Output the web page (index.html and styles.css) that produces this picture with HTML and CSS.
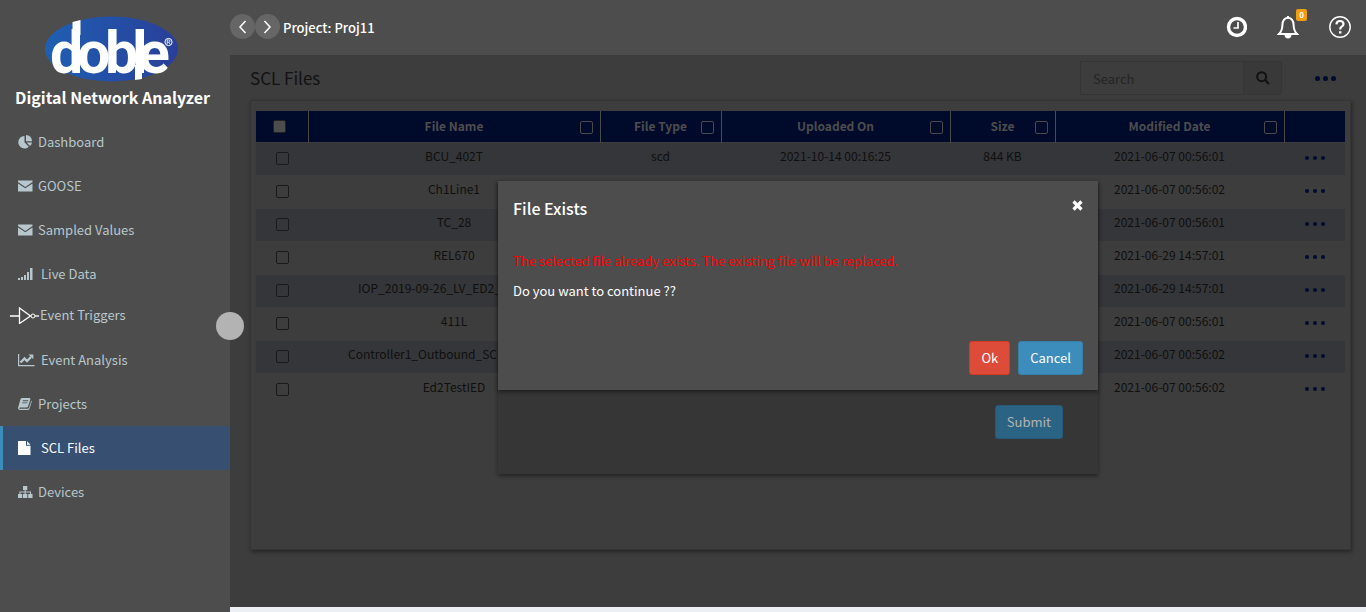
FILE: index.html
```html
<!DOCTYPE html>
<html lang="en">
<head>
<meta charset="utf-8">
<meta name="viewport" content="width=device-width, initial-scale=1">
<title>Digital Network Analyzer - SCL Files</title>
<link rel="stylesheet" href="styles.css">
</head>
<body>
<div class="app">
  <aside class="sidebar">
    <div class="brand">
      <svg class="logo" viewBox="0 0 136 68" width="136" height="68" role="img" aria-label="doble">
        <defs>
          <linearGradient id="oval" x1="0" x2="1"><stop offset="0" stop-color="#1f5fb2"/><stop offset="1" stop-color="#293f99"/></linearGradient>
        </defs>
        <ellipse cx="67.500" cy="34" rx="66.500" ry="32.500" fill="url(#oval)"/>
        <g fill="#fff">
          <text class="logo-text" y="58" x="6 33 61 88 94">doble</text>
          <path d="M28.500 7L36.500 5V20H28.500zM91 50H98V64L91 65z"/>
        </g>
        <g fill="none" stroke="#fff"><circle cx="124.500" cy="27" r="3.600" stroke-width="1"/><path d="M123.200 29.300V24.900H124.800Q126 25 126 26.100T124.800 27.200H123.200M124.800 27.200L126 29.300" stroke-width=".8"/></g>
      </svg>
      <div class="product">Digital Network Analyzer</div>
    </div>
    <nav class="menu">
      <a href="#" class="item"><svg width="15" height="14" viewBox="0 0 15 14"><path d="M6.500 1A6.200 6.200 0 1 0 10.800 11.700L6.500 7.300z"/><path d="M8 0A6 6 0 0 1 14 6.200H8z"/><path d="M8.600 7.400H14A6 6 0 0 1 12 11z"/></svg><span>Dashboard</span></a>
      <a href="#" class="item"><svg width="15" height="14" viewBox="0 0 15 14"><path d="M0 1.500H14.500V3L7.300 8 0 3zM0 4.500L7.300 9.300 14.500 4.500V12.500H0z"/></svg><span>GOOSE</span></a>
      <a href="#" class="item"><svg width="15" height="14" viewBox="0 0 15 14"><path d="M0 1.500H14.500V3L7.300 8 0 3zM0 4.500L7.300 9.300 14.500 4.500V12.500H0z"/></svg><span>Sampled Values</span></a>
      <a href="#" class="item wide"><svg width="15" height="14" viewBox="0 0 15 14"><path d="M0 11h2v2H0zM3 10h2v3H3zM6 8h2v5H6zM9 5h2v8H9zM12 1h2.500v12H12z"/></svg><span>Live Data</span></a>
      <a href="#" class="item trigger"><svg width="30" height="18" viewBox="0 0 30 18"><g fill="none" stroke="#fff" stroke-width="1.300"><path d="M0 10H9M9.500 2V17.500L20.500 10z"/><circle cx="23" cy="10" r="2" stroke-width="1"/><path d="M25 10H29"/></g></svg><span>Event Triggers</span></a>
      <a href="#" class="item chart"><svg width="17" height="14" viewBox="0 0 17 14"><path d="M0 1H1.200V12H16.500V13.200H0z"/><path d="M2.500 9.500L6.500 5.500 9 8 13 4" fill="none" stroke="#b8c7ce" stroke-width="2.400"/><path d="M10.500 1.500H15.300V6.300z"/></svg><span>Event Analysis</span></a>
      <a href="#" class="item"><svg width="15" height="14" viewBox="0 0 15 14"><path fill-rule="evenodd" d="M4 1H11.500Q12.700 1.200 12.300 2.400L10 9.500Q9.600 10.500 8.500 10.500H2Q1 10.700 1.400 11.700H9.700Q10.700 11.600 11 10.700L13.300 3.400Q14 4 13.600 5L11.500 11.700Q11 13 9.700 13H1.700Q-.4 12.500.1 10.600L2.500 2.300Q3 1 4 1zM5 3.300L4.700 4.200H10L10.300 3.300zM4.300 5.400L4 6.300H9.300L9.600 5.400z"/></svg><span>Projects</span></a>
      <a href="#" class="item wide active" aria-current="page"><svg width="15" height="14" viewBox="0 0 15 14"><path d="M0 0H8V4.800H12.500V14H0zM9 0L12.500 3.800H9z"/></svg><span>SCL Files</span></a>
      <a href="#" class="item"><svg width="15" height="14" viewBox="0 0 15 14"><path d="M5 1H9.300V5H7.700V6.500H13V9H14.500V13H10.200V9H12V7.500H7.700V9H9.300V13H5V9H6.600V7.500H2.400V9H4.200V13H0V9H1.400V6.500H6.600V5H5z"/></svg><span>Devices</span></a>
    </nav>
    <button class="handle" aria-label="Resize sidebar"></button>
  </aside>

  <main class="main">
    <header class="topbar">
      <button class="round" aria-label="Back"><svg width="9" height="14" viewBox="0 0 9 14"><path d="M7.500 1L2 7l5.500 6"/></svg></button>
      <button class="round" aria-label="Forward"><svg width="9" height="14" viewBox="0 0 9 14"><path d="M1.500 1L7 7l-5.500 6"/></svg></button>
      <span class="project">Project: Proj11</span>
      <div class="tools">
        <button class="tool" aria-label="History"><svg width="22" height="22" viewBox="0 0 22 22" fill="none" stroke="#fff"><circle cx="12" cy="11" r="8.500" stroke-width="3.400"/><path d="M13 6V12H8.500" stroke-width="1.700"/></svg></button>
        <button class="tool" aria-label="Notifications"><svg width="22" height="24" viewBox="0 0 22 24"><path d="M11 2.800C7 3.300 5.500 6 5.400 10C5.300 14 4.500 16.500 2 19H20C17.500 16.500 16.700 14 16.600 10C16.500 6 15 3.300 11 2.800z" fill="none" stroke="#fff" stroke-width="2"/><path d="M10 1h2v2h-2zM7.500 20H14.500Q14 23.500 11 23.500T7.500 20z" fill="#fff"/></svg><span class="badge">0</span></button>
        <button class="tool" aria-label="Help"><svg width="22" height="22" viewBox="0 0 22 22" fill="none" stroke="#fff"><circle cx="11" cy="11" r="10.200" stroke-width="1.400"/><path d="M7.400 8.300Q7.700 5 11 5T14.500 8Q14.500 9.500 12.700 10.700Q11.200 11.700 11.200 13.500" stroke-width="2.200"/><path d="M10 15.200H12.400V17.500H10z" fill="#fff" stroke="none"/></svg></button>
      </div>
    </header>

    <section class="content">
      <div class="heading">
        <h1>SCL Files</h1>
        <form class="search">
          <input type="text" placeholder="Search" aria-label="Search">
          <button type="button" aria-label="Run search"><svg width="14" height="14" viewBox="0 0 14 14" fill="none" stroke="#111"><circle cx="5.700" cy="5.700" r="4.500" stroke-width="2"/><path d="M9 9L13 13" stroke-width="2.200"/></svg></button>
        </form>
        <button class="dots big" aria-label="More actions"><i></i><i></i><i></i></button>
      </div>
      <div class="panel">
        <table class="files">
          <colgroup><col class="c-pick"><col><col class="c-type"><col class="c-date"><col class="c-size"><col class="c-date"><col class="c-more"></colgroup>
          <thead>
            <tr>
              <th><input type="checkbox" class="all" aria-label="Select all"></th>
              <th><div class="th"><span>File Name</span><input type="checkbox" aria-label="File Name options"></div></th>
              <th><div class="th"><span>File Type</span><input type="checkbox" aria-label="File Type options"></div></th>
              <th><div class="th"><span>Uploaded On</span><input type="checkbox" aria-label="Uploaded On options"></div></th>
              <th><div class="th"><span>Size</span><input type="checkbox" aria-label="Size options"></div></th>
              <th><div class="th"><span>Modified Date</span><input type="checkbox" aria-label="Modified Date options"></div></th>
              <th></th>
            </tr>
          </thead>
          <tbody>
            <tr><td><input type="checkbox" aria-label="Select BCU_402T"></td><td>BCU_402T</td><td>scd</td><td>2021-10-14 00:16:25</td><td>844 KB</td><td>2021-06-07 00:56:01</td><td><button class="dots" aria-label="Actions"><i></i><i></i><i></i></button></td></tr>
            <tr><td><input type="checkbox" aria-label="Select Ch1Line1"></td><td>Ch1Line1</td><td></td><td></td><td></td><td>2021-06-07 00:56:02</td><td><button class="dots" aria-label="Actions"><i></i><i></i><i></i></button></td></tr>
            <tr><td><input type="checkbox" aria-label="Select TC_28"></td><td>TC_28</td><td></td><td></td><td></td><td>2021-06-07 00:56:01</td><td><button class="dots" aria-label="Actions"><i></i><i></i><i></i></button></td></tr>
            <tr><td><input type="checkbox" aria-label="Select REL670"></td><td>REL670</td><td></td><td></td><td></td><td>2021-06-29 14:57:01</td><td><button class="dots" aria-label="Actions"><i></i><i></i><i></i></button></td></tr>
            <tr><td><input type="checkbox" aria-label="Select IOP_2019-09-26_LV_ED2"></td><td class="long">IOP_2019-09-26_LV_ED2_</td><td></td><td></td><td></td><td>2021-06-29 14:57:01</td><td><button class="dots" aria-label="Actions"><i></i><i></i><i></i></button></td></tr>
            <tr><td><input type="checkbox" aria-label="Select 411L"></td><td>411L</td><td></td><td></td><td></td><td>2021-06-07 00:56:01</td><td><button class="dots" aria-label="Actions"><i></i><i></i><i></i></button></td></tr>
            <tr><td><input type="checkbox" aria-label="Select Controller1_Outbound_SCL"></td><td class="long longer">Controller1_Outbound_SCL</td><td></td><td></td><td></td><td>2021-06-07 00:56:02</td><td><button class="dots" aria-label="Actions"><i></i><i></i><i></i></button></td></tr>
            <tr><td><input type="checkbox" aria-label="Select Ed2TestIED"></td><td>Ed2TestIED</td><td></td><td></td><td></td><td>2021-06-07 00:56:02</td><td><button class="dots" aria-label="Actions"><i></i><i></i><i></i></button></td></tr>
          </tbody>
        </table>
      </div>
    </section>

    <div class="dialogs">
      <div class="dialog upload">
        <button class="btn submit">Submit</button>
      </div>
      <div class="dialog confirm" role="dialog" aria-labelledby="confirm-title">
        <div class="dialog-head">
          <h2 id="confirm-title">File Exists</h2>
          <button class="close" aria-label="Close"><svg width="11" height="11" viewBox="0 0 11 11"><path d="M1.500 1.500L9.500 9.500M9.500 1.500L1.500 9.500" stroke="#fff" stroke-width="3.200"/></svg></button>
        </div>
        <p class="warning">The selected file already exists. The existing file will be replaced.</p>
        <p>Do you want to continue ??</p>
        <div class="actions">
          <button class="btn danger">Ok</button>
          <button class="btn primary">Cancel</button>
        </div>
      </div>
    </div>
  </main>
</div>
</body>
</html>
```
FILE: styles.css
```css
* { box-sizing: border-box; }
body {
  margin: 0;
  background: #ecf0f5;
  color: #fff;
  font: 13px/20px "Noto Sans CJK SC", "Noto Sans", sans-serif;
}
button, input { font: inherit; color: inherit; }
button { border: 0; padding: 0; background: none; cursor: pointer; }
h1, h2, p { margin: 0; font-weight: 400; }

.app { display: flex; min-height: 100vh; }

/* Sidebar */
.sidebar { position: relative; flex: 0 0 230px; background: #4d4d4d; }
.brand { height: 120px; padding: 15px 15px 0; }
.logo { display: block; margin-left: 29px; overflow: visible; }
.logo-text { font: 700 59px Roboto, sans-serif; }
.product { margin-top: 2px; font-size: 16px; line-height: 24px; font-weight: 700; white-space: nowrap; }
.item {
  display: flex;
  align-items: center;
  gap: 5px;
  height: 44px;
  padding-left: 15px;
  border-left: 3px solid transparent;
  color: #b8c7ce;
  text-decoration: none;
}
.item svg { flex: none; fill: currentColor; }
.item.wide { gap: 8px; }
.item.chart { gap: 6px; }
.item.trigger { gap: 0; height: 42px; padding: 0 0 4px 7px; }
.item.active { background: #375072; border-color: #3c8dbc; color: #fff; }
.handle {
  position: absolute;
  right: -14px;
  top: 312px;
  z-index: 1;
  width: 28px;
  height: 28px;
  border-radius: 50%;
  background: #b3b3b3;
}

/* Top bar */
.main { position: relative; flex: 1; min-width: 0; display: flex; flex-direction: column; padding-bottom: 5px; }
.topbar { display: flex; align-items: center; height: 55px; padding: 0 15px 2px 0; background: #4d4d4d; }
.round { display: grid; place-items: center; width: 25px; height: 25px; border-radius: 50%; background: #666; }
.round svg { fill: none; stroke: #fff; stroke-width: 1.5; }
.project { margin: 2px 0 0 3px; font-weight: 500; }
.tools { display: flex; gap: 30px; margin-left: auto; }
.tool { position: relative; display: grid; place-items: center; }
.badge {
  position: absolute;
  top: -6px;
  right: -8px;
  width: 11px;
  border-radius: 2px;
  background: #f39c12;
  font-size: 8px;
  line-height: 12px;
  font-weight: 700;
}

/* Page content */
.content { flex: 1; display: flex; flex-direction: column; padding: 5px 15px 57px 20px; background: #3d3d3d; }
.heading { display: flex; align-items: center; height: 36px; color: #121212; }
h1 { font-size: 17px; }
.search { display: flex; margin-left: auto; }
.search input {
  width: 164px;
  height: 34px;
  padding: 0 12px;
  border: 1px solid #343538;
  border-radius: 0;
  background: transparent;
}
.search input::placeholder { color: #242424; opacity: 1; }
.search button { display: grid; place-items: center; width: 38px; height: 34px; border: 1px solid #343538; border-left: 0; border-radius: 0 2px 2px 0; background: #393939; }
.dots { display: inline-flex; gap: 4px; vertical-align: top; }
.dots i { width: 4px; height: 4px; border-radius: 50%; background: #000b2e; }
.dots.big { gap: 3px; margin: 0 15px 0 33px; }
.dots.big i { width: 5px; height: 5px; }

.panel {
  flex: 1;
  margin-top: 4px;
  padding: 10px 5px;
  border: 1px solid #353535;
  box-shadow: 1px 2px 4px rgba(0, 0, 0, .4);
}
.files { width: 100%; table-layout: fixed; border-collapse: collapse; font-size: 12px; line-height: 18px; text-align: center; color: #0f0f0f; }
.c-pick { width: 52px; }
.c-type { width: 121px; }
.c-date { width: 229px; }
.c-size { width: 105px; }
.c-more { width: 61px; }
.files th { height: 31px; padding: 0; background: #000a2b; color: #4d4d4d; }
.files th + th { border-left: 1px solid #4a4a4a; }
.files th:first-child { padding: 0 4px 2px 0; }
.th { display: grid; align-items: center; }
.th span, .th input { grid-area: 1 / 1; }
.files td { height: 33px; padding: 3px 0 9px; border-top: 1px solid #3d3d3d; white-space: nowrap; }
.files tbody tr:nth-child(odd) { background: #353639; }
.files td:first-child, .files td:last-child { padding: 9px 0 0; vertical-align: top; line-height: 13px; }
.files td:last-child { padding-top: 13px; }
.files td.long { padding-left: 50px; text-align: left; }
.files td.longer { padding-left: 40px; }
.files input {
  appearance: none;
  display: inline-block;
  width: 13px;
  height: 13px;
  margin: 0;
  border: 1px solid #191919;
  border-radius: 2px;
  vertical-align: middle;
}
.files td input { vertical-align: top; }
.files .th input { justify-self: end; margin: 3px 7px 0 0; border-color: #4a4a4a; }
.files input.all { border-color: #222; background: #4d4d4d; }

/* Dialogs */
.dialogs { position: absolute; inset: 181px 0 auto; display: grid; justify-content: center; grid-template-columns: minmax(0, 600px); }
.dialog { grid-area: 1 / 1; align-self: start; box-shadow: 0 2px 4px rgba(0, 0, 0, .45); }
.upload { display: flex; justify-content: flex-end; padding: 224px 35px 35px; background: #363636; }
.confirm { padding: 15px; background: #4d4d4d; }
.dialog-head { display: flex; justify-content: space-between; align-items: center; height: 24px; margin-bottom: 31px; }
h2 { font-size: 16px; font-weight: 500; }
.close { display: grid; margin-top: -5px; }
.confirm p { margin-bottom: 10px; }
.confirm .warning { color: #f00; }
.confirm p + p { margin-bottom: 40px; }
.actions { display: flex; justify-content: flex-end; gap: 8px; }
.btn { height: 34px; padding: 0 11px; border: 1px solid #367fa9; border-radius: 3px; background: #3c8dbc; color: #fff; }
.danger { border-color: #d73925; background: #dd4b39; }
.submit { border-color: #26597a; background: #2a6384; color: #b3b3b3; }
```
